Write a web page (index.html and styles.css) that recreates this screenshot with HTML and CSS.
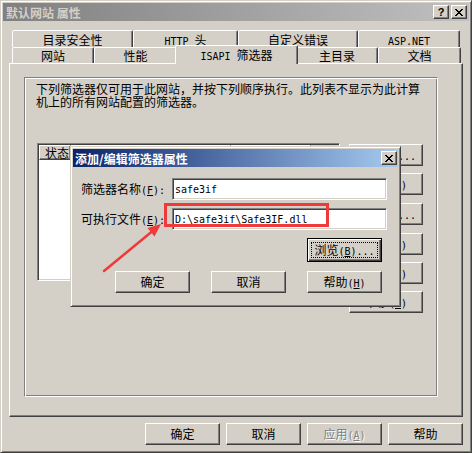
FILE: index.html
```html
<!DOCTYPE html>
<html lang="zh-CN">
<head>
<meta charset="utf-8">
<title>默认网站 属性</title>
<link rel="stylesheet" href="styles.css">
</head>
<body>
<div class="screen">
  <div class="window">
    <div class="titlebar inactive">
      <span class="title">默认网站 属性</span>
      <div class="capbtns">
        <span class="capbtn help">?</span>
        <span class="capbtn"><svg class="xglyph" width="8" height="7" viewBox="0 0 8 7"><path d="M0 0h2v1H0z M6 0h2v1H6z M1 1h2v1H1z M5 1h2v1H5z M2 2h4v1H2z M3 3h2v1H3z M2 4h4v1H2z M1 5h2v1H1z M5 5h2v1H5z M0 6h2v1H0z M6 6h2v1H6z"/></svg></span>
      </div>
    </div>
    <div class="client">
      <div class="tabs">
        <div class="tabrow back">
          <div class="tab t-security">目录安全性</div>
          <div class="tab t-http"><span class="m">HTTP </span>头</div>
          <div class="tab t-errors">自定义错误</div>
          <div class="tab t-aspnet"><span class="m">ASP.NET</span></div>
        </div>
        <div class="tabrow front">
          <div class="tab t-site">网站</div>
          <div class="tab t-perf">性能</div>
          <div class="tab t-isapi sel"><span class="m">ISAPI </span>筛选器</div>
          <div class="tab t-home">主目录</div>
          <div class="tab t-docs">文档</div>
        </div>
      </div>
      <div class="panel">
        <div class="etched">
          <p class="desc">下列筛选器仅可用于此网站，并按下列顺序执行。此列表不显示为此计算<br>机上的所有网站配置的筛选器。</p>
          <div class="listarea">
            <div class="listview">
              <div class="lv-head">
                <span class="lv-col c-status">状态</span>
                <span class="lv-col c-name"></span>
                <span class="lv-col c-prio"></span>
              </div>
            </div>
            <div class="sidebtns">
              <div class="btn">添加<span class="m">(<u>D</u>)...</span></div>
              <div class="btn">删除<span class="m">(<u>R</u>)</span></div>
              <div class="btn">编辑<span class="m">(<u>I</u>)...</span></div>
              <div class="btn">禁用<span class="m">(<u>B</u>)</span></div>
              <div class="btn">上移<span class="m">(<u>U</u>)</span></div>
              <div class="btn">下移<span class="m">(<u>O</u>)</span></div>
            </div>
          </div>
        </div>
      </div>
      <div class="footer">
        <div class="btn">确定</div>
        <div class="btn">取消</div>
        <div class="btn disabled">应用<span class="m">(<u>A</u>)</span></div>
        <div class="btn">帮助</div>
      </div>
    </div>
  </div>

  <div class="dialog">
    <div class="dlg-title">
      <span class="title">添加/编辑筛选器属性</span>
      <span class="capbtn"><svg class="xglyph" width="8" height="7" viewBox="0 0 8 7"><path d="M0 0h2v1H0z M6 0h2v1H6z M1 1h2v1H1z M5 1h2v1H5z M2 2h4v1H2z M3 3h2v1H3z M2 4h4v1H2z M1 5h2v1H1z M5 5h2v1H5z M0 6h2v1H0z M6 6h2v1H6z"/></svg></span>
    </div>
    <div class="dlg-body">
      <div class="field">
        <span class="flabel">筛选器名称<span class="m">(<u>F</u>):</span></span>
        <div class="input"><span class="m">safe3if</span></div>
      </div>
      <div class="field">
        <span class="flabel">可执行文件<span class="m">(<u>E</u>):</span></span>
        <div class="input"><span class="m">D:\safe3if\Safe3IF.dll</span></div>
      </div>
      <div class="browse-row">
        <div class="btn default"><span class="focus">浏览<span class="m">(<u>B</u>)...</span></span></div>
      </div>
      <div class="dlg-btns">
        <div class="btn">确定</div>
        <div class="btn">取消</div>
        <div class="btn">帮助<span class="m">(<u>H</u>)</span></div>
      </div>
    </div>
  </div>

  <div class="highlight"></div>
  <svg class="arrow" width="472" height="453" viewBox="0 0 472 453">
    <line x1="104" y1="271" x2="152" y2="231.5" stroke="#ef3a3a" stroke-width="2.5" stroke-linecap="round"/>
    <polygon points="161,224 147.5,228 154.5,236.5" fill="#ef3a3a"/>
  </svg>
</div>
</body>
</html>
```

FILE: styles.css
```css
* { box-sizing: border-box; }
html, body { margin: 0; padding: 0; }
body {
  background: #d4d0c8;
  color: #000;
  font: 12px/13px "Noto Sans CJK SC", "Noto Sans", sans-serif;
}
u { text-decoration: underline; }
.m { font-family: "DejaVu Sans Mono", "Liberation Mono", monospace; font-size: 10px; }

.screen { position: relative; width: 472px; height: 453px; overflow: hidden; }

/* ---------- main window ---------- */
.window {
  width: 472px; height: 453px;
  display: flex; flex-direction: column;
  background: #d4d0c8;
  border: 1px solid;
  border-color: #d4d0c8 #404040 #404040 #d4d0c8;
  box-shadow: inset 1px 1px 0 #fff, inset -1px -1px 0 #808080;
  padding: 2px;
}
.titlebar {
  height: 18px; flex: none;
  display: flex; align-items: center;
  padding: 0 2px 0 3px;
  background: linear-gradient(to right, #808080, #c0c0c0);
}
.titlebar .title { flex: 1; color: #d4d0c8; font-weight: bold; white-space: pre; }
.capbtns { display: flex; gap: 2px; }
.capbtn {
  width: 16px; height: 14px; flex: none;
  display: flex; align-items: center; justify-content: center;
  background: #d4d0c8;
  border: 1px solid;
  border-color: #fff #404040 #404040 #fff;
  box-shadow: inset -1px -1px 0 #808080;
}
.capbtn.help { font: bold 11px/12px "Liberation Sans", sans-serif; padding-bottom: 1px; }
.xglyph { display: block; shape-rendering: crispEdges; fill: #000; margin-left: -1px; }

.client { flex: 1; display: flex; flex-direction: column; padding: 9px 6px 0 6px; }

/* ---------- tabs ---------- */
.tabs { position: relative; z-index: 1; }
.tabrow { display: flex; padding-left: 3px; }
.tabrow.back { height: 17px; }
.tabrow.front { height: 16px; }
.tab {
  flex: none; height: 100%;
  text-align: center; white-space: pre;
  background: #d4d0c8;
  border: 1px solid; border-bottom: 0;
  border-color: #fff #404040 transparent #fff;
  border-radius: 2px 2px 0 0;
  box-shadow: inset -1px 0 0 #808080;
}
.back .tab { line-height: 15px; padding-top: 1px; }
.front .tab { line-height: 14px; padding-top: 1px; }
.t-security { width: 121px; }
.t-http { width: 105px; }
.t-errors { width: 120px; }
.t-aspnet { width: 102px; }
.t-site { width: 82px; }
.t-perf { width: 83px; }
.t-isapi { width: 119px; }
.t-home { width: 82px; }
.t-docs { width: 83px; }
.tab.sel {
  position: relative; z-index: 2;
  width: 123px; height: 19px;
  margin: -2px -2px 0 -2px;
  padding-top: 2px;
}

/* ---------- panel ---------- */
.panel {
  height: 354px; flex: none;
  border: 1px solid;
  border-color: #fff #404040 #404040 #fff;
  box-shadow: inset -1px -1px 0 #808080;
  padding: 13px 24px 19px 14px;
}
.etched {
  height: 100%;
  border: 1px solid;
  border-color: #808080 #fff #fff #808080;
  box-shadow: inset 1px 1px 0 #fff, inset -1px -1px 0 #808080;
  padding: 4px 0 0 11px;
}
.desc { margin: 0; white-space: nowrap; line-height: 13px; }
.listarea { display: flex; margin: 35px 0 0 1px; }
.listview {
  width: 303px; height: 138px; flex: none;
  background: #fff;
  border: 1px solid;
  border-color: #808080 #fff #fff #808080;
  box-shadow: inset 1px 1px 0 #404040, inset -1px -1px 0 #d4d0c8;
  padding: 1px;
}
.lv-head { display: flex; height: 15px; background: #d4d0c8; }
.lv-col {
  flex: none; height: 15px; line-height: 12px; padding: 1px 0 0 5px;
  border: 1px solid;
  border-color: #fff #404040 #404040 #fff;
  box-shadow: inset -1px -1px 0 #808080;
  white-space: nowrap;
}
.c-status { width: 32px; }
.c-name { width: 160px; }
.c-prio { width: 80px; }

.sidebtns { display: flex; flex-direction: column; gap: 7px; width: 74px; margin: 1px 0 0 9px; }
.sidebtns .btn:nth-child(3), .sidebtns .btn:nth-child(4) { margin-top: 1px; }

/* ---------- buttons ---------- */
.btn {
  height: 22px; flex: none;
  text-align: center; line-height: 20px; white-space: nowrap;
  background: #d4d0c8;
  border: 1px solid;
  border-color: #fff #404040 #404040 #fff;
  box-shadow: inset -1px -1px 0 #808080;
}
.btn.disabled { color: #808080; text-shadow: 1px 1px 0 #fff; }
.btn.default {
  height: 24px;
  border-color: #000;
  box-shadow: inset 1px 1px 0 #fff, inset -1px -1px 0 #404040, inset -2px -2px 0 #808080;
  padding: 3px;
  display: flex;
}
.focus { flex: 1; border: 1px dotted #000; line-height: 14px; }

.footer { display: flex; justify-content: flex-end; gap: 6px; margin-top: 6px; }
.footer .btn { width: 75px; }

/* ---------- dialog ---------- */
.dialog {
  position: absolute; left: 70px; top: 146px;
  width: 331px; height: 161px;
  background: #d4d0c8;
  border: 1px solid;
  border-color: #d4d0c8 #404040 #404040 #d4d0c8;
  box-shadow: inset 1px 1px 0 #fff, inset -1px -1px 0 #808080;
  padding: 2px;
}
.dlg-title {
  height: 18px;
  display: flex; align-items: center;
  padding: 0 1px 0 2px;
  background: linear-gradient(to right, #0a246a, #a6caf0);
}
.dlg-title .title { flex: 1; color: #fff; font-weight: bold; }
.dlg-body { padding: 11px 11px 0 8px; }
.field { display: flex; align-items: center; height: 22px; }
.field + .field { margin-top: 8px; }
.flabel { width: 91px; flex: none; white-space: nowrap; }
.input {
  width: 215px; height: 22px; flex: none;
  display: flex; align-items: center;
  background: #fff;
  border: 1px solid;
  border-color: #808080 #fff #fff #808080;
  box-shadow: inset 1px 1px 0 #404040, inset -1px -1px 0 #d4d0c8;
  padding: 1px 0 0 2px;
  white-space: pre;
}
.browse-row { display: flex; justify-content: flex-end; padding-right: 5px; margin-top: 8px; }
.browse-row .btn { width: 75px; }
.dlg-btns { display: flex; justify-content: flex-end; gap: 21px; padding-right: 5px; margin-top: 9px; }
.dlg-btns .btn { width: 75px; }

/* ---------- annotation overlay ---------- */
.highlight {
  position: absolute; left: 164px; top: 203px;
  width: 165px; height: 24px;
  border: 3px solid #ef3a3a;
}
.arrow { position: absolute; left: 0; top: 0; pointer-events: none; }
```
